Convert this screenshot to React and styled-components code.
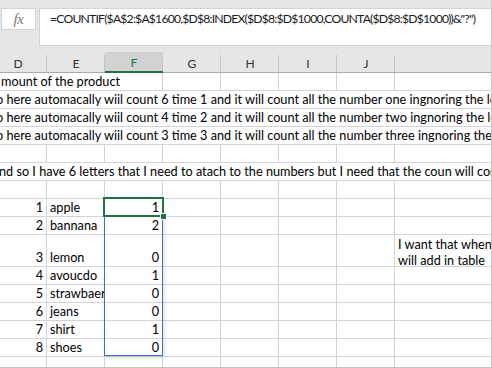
import React from "react";
import styled, { createGlobalStyle } from "styled-components";

const GlobalStyle = createGlobalStyle`
  html, body { margin: 0; padding: 0; background: #ffffff; }
  body { font-family: Lato, "Liberation Sans", sans-serif; }
`;

const FONT = `Lato, "Liberation Sans", sans-serif`;
const GRID = "#d4d4d4";

const Window = styled.div`
  position: relative;
  width: 492px;
  height: 368px;
  box-sizing: border-box;
  overflow: hidden;
  background: #e6e6e6;
  border-right: 1px solid #c6c6c6;
  border-bottom: 1px solid #c6c6c6;
  display: flex;
  flex-direction: column;
`;

const FormulaBar = styled.div`
  height: 52px;
  flex-shrink: 0;
  box-sizing: border-box;
  padding-top: 8px;
  display: flex;
  align-items: flex-start;
`;

const FxButton = styled.div`
  margin-left: 1px;
  width: 35px;
  height: 22px;
  box-sizing: border-box;
  background: #ffffff;
  border: 1px solid #d4d4d4;
  display: flex;
  align-items: center;
  justify-content: center;
  font-family: "Liberation Serif", "DejaVu Serif", serif;
  font-style: italic;
  font-size: 15px;
  color: #7a7a7a;
  letter-spacing: -0.5px;
`;

const FormulaInput = styled.div`
  margin-left: 3px;
  flex: 1;
  height: 38px;
  box-sizing: border-box;
  background: #ffffff;
  border: 1px solid #d4d4d4;
  border-right: none;
  padding: 2px 0 0 10px;
  font-family: ${FONT};
  font-size: 12.2px;
  letter-spacing: -0.8px;
  line-height: 15px;
  color: #1a1a1a;
  white-space: nowrap;
  overflow: hidden;
`;

const HeaderRow = styled.div`
  flex-shrink: 0;
  height: 21px;
  margin-left: -11px;
  display: grid;
  grid-template-columns: repeat(7, 58px) 1fr;
`;

const ColHeader = styled.div`
  position: relative;
  box-sizing: border-box;
  height: 21px;
  display: flex;
  align-items: flex-end;
  justify-content: center;
  padding-bottom: 1px;
  font-family: ${FONT};
  font-size: 12px;
  line-height: 15px;
  color: ${(p) => (p.$active ? "#217346" : "#333333")};
  background: ${(p) => (p.$active ? "#d2d2d2" : "#e6e6e6")};
  border-bottom: ${(p) => (p.$active ? "2px solid #217346" : "1px solid #ababab")};
  &::after {
    content: "";
    display: ${(p) => (p.$last ? "none" : "block")};
    position: absolute;
    right: 0;
    top: 3px;
    bottom: 0;
    width: 1px;
    background: #c6c6c6;
  }
`;

const Sheet = styled.div`
  flex: 1;
  overflow: hidden;
  background: #ffffff;
  margin-left: -11px;
`;

const Row = styled.div`
  display: grid;
  grid-template-columns: repeat(7, 58px) 1fr;
  height: ${(p) => p.$h}px;
`;

const Cell = styled.div`
  grid-column: span ${(p) => p.$span || 1};
  box-sizing: border-box;
  min-width: 0;
  overflow: hidden;
  white-space: nowrap;
  display: flex;
  align-items: ${(p) => (p.$top ? "flex-start" : "flex-end")};
  justify-content: ${(p) => (p.$num ? "flex-end" : "flex-start")};
  padding: ${(p) => (p.$top ? "1px 3px 0" : "0 3px 1px")};
  padding-left: ${(p) => (p.$indent != null ? p.$indent : 3)}px;
  border-bottom: 1px solid ${GRID};
  border-right: ${(p) => (p.$open ? "none" : `1px solid ${GRID}`)};
  font-family: ${FONT};
  font-size: 12.7px;
  line-height: 16px;
  color: #000000;
`;

const WrapText = styled.div`
  display: flex;
  flex-direction: column;
`;

const ActiveCell = styled.div`
  position: absolute;
  left: 103px;
  top: 197px;
  width: 61px;
  height: 20px;
  box-sizing: border-box;
  border: 2px solid #217346;
  z-index: 3;
`;

const FillHandle = styled.div`
  position: absolute;
  left: 160px;
  top: 213px;
  width: 7px;
  height: 7px;
  box-sizing: border-box;
  background: #217346;
  border: 1px solid #ffffff;
  z-index: 4;
`;

const RangeOutline = styled.div`
  position: absolute;
  left: 104px;
  top: 216px;
  width: 59px;
  height: 140px;
  box-sizing: border-box;
  border: 1px solid #3a70c8;
  border-top: none;
  box-shadow: 1px 2px 4px rgba(0, 0, 0, 0.14);
  z-index: 2;
`;

const columns = ["D", "E", "F", "G", "H", "I", "J", ""];

const EmptyCells = ({ count }) =>
  Array.from({ length: count }).map((_, i) => (
    <Cell key={`e${i}`} $open={i === count - 1} />
  ));

const textRows = [
  { text: "mount of the product", span: 3, indent: 12 },
  {
    text:
      "o here automacally wiil count 6 time 1 and it will count all the number one ingnoring the letters",
    span: 8,
    indent: 7,
  },
  {
    text:
      "o here automacally wiil count 4 time 2 and it will count all the number two ingnoring the letters",
    span: 8,
    indent: 7,
  },
  {
    text:
      "o here automacally wiil count 3 time 3 and it will count all the number three ingnoring the letters",
    span: 8,
    indent: 7,
  },
  null,
  {
    text:
      "nd so I have 6 letters that I need to atach to the numbers but I need that the coun will count",
    span: 8,
    indent: 10,
  },
  null,
];

const items = [
  { n: 1, name: "apple", v: 1 },
  { n: 2, name: "bannana", v: 2 },
  { n: 3, name: "lemon", v: 0, tall: true },
  { n: 4, name: "avoucdo", v: 1 },
  { n: 5, name: "strawbaerry", v: 0 },
  { n: 6, name: "jeans", v: 0 },
  { n: 7, name: "shirt", v: 1 },
  { n: 8, name: "shoes", v: 0 },
];

export default function App() {
  return (
    <>
      <GlobalStyle />
      <Window>
        <FormulaBar>
          <FxButton>fx</FxButton>
          <FormulaInput>
            =COUNTIF($A$2:$A$1600,$D$8:INDEX($D$8:$D$1000,COUNTA($D$8:$D$1000))&amp;"?")
          </FormulaInput>
        </FormulaBar>
        <HeaderRow>
          {columns.map((c, i) => (
            <ColHeader key={i} $active={c === "F"} $last={i === columns.length - 1}>
              {c}
            </ColHeader>
          ))}
        </HeaderRow>
        <Sheet>
          {textRows.map((r, i) =>
            r ? (
              <Row key={`t${i}`} $h={18}>
                <Cell $span={r.span} $indent={r.indent} $open={r.span === 8}>
                  {r.text}
                </Cell>
                {r.span < 8 && <EmptyCells count={8 - r.span} />}
              </Row>
            ) : (
              <Row key={`t${i}`} $h={18}>
                <EmptyCells count={8} />
              </Row>
            )
          )}
          {items.map((it) => (
            <Row key={it.n} $h={it.tall ? 32 : 18}>
              <Cell $num>{it.n}</Cell>
              <Cell>{it.name}</Cell>
              <Cell $num>{it.v}</Cell>
              <Cell />
              <Cell />
              <Cell />
              <Cell />
              {it.tall ? (
                <Cell $top $open>
                  <WrapText>
                    <span>I want that when</span>
                    <span>will add in table</span>
                  </WrapText>
                </Cell>
              ) : (
                <Cell $open />
              )}
            </Row>
          ))}
          <Row $h={18}>
            <EmptyCells count={8} />
          </Row>
        </Sheet>
        <RangeOutline />
        <ActiveCell />
        <FillHandle />
      </Window>
    </>
  );
}
